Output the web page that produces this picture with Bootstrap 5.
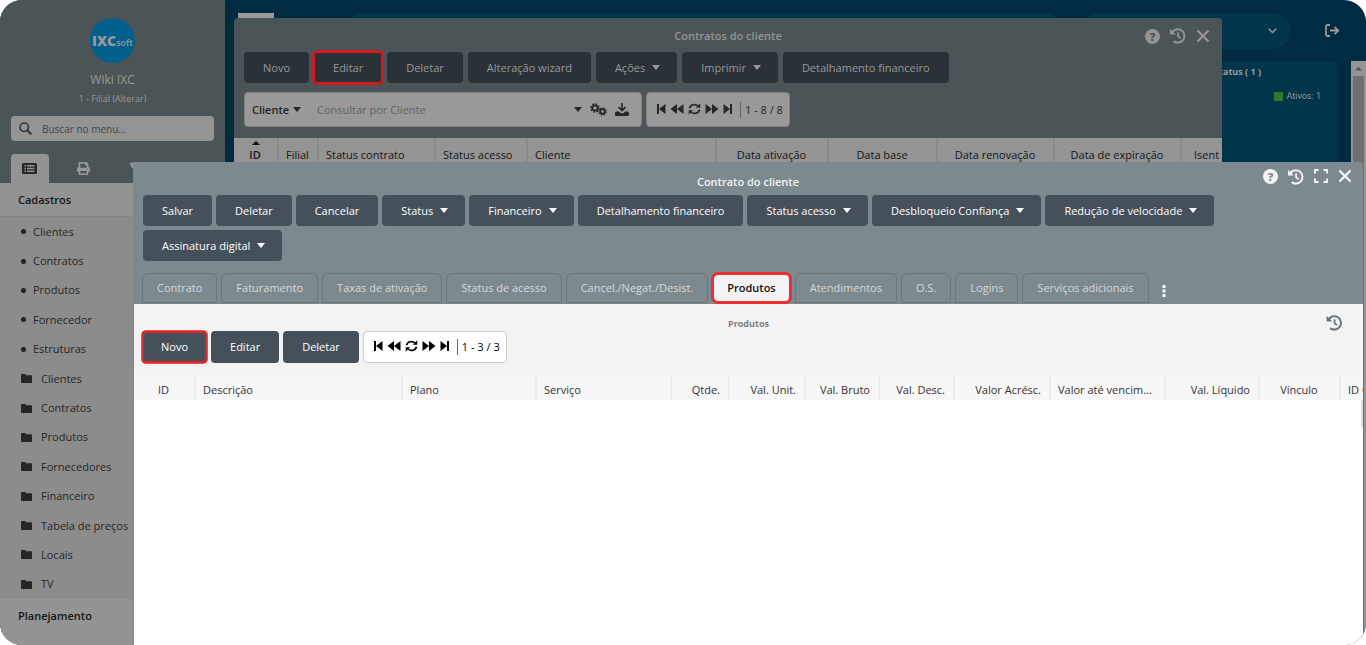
<!DOCTYPE html>
<html lang="pt-BR">
<head>
<meta charset="utf-8">
<meta name="viewport" content="width=device-width, initial-scale=1">
<title>Contrato do cliente</title>
<link href="https://cdn.jsdelivr.net/npm/bootstrap@5.3.0/dist/css/bootstrap.min.css" rel="stylesheet">
<style>
body{font-family:"Open Sans","Noto Sans",sans-serif;font-size:11px;line-height:16px;background:#fff;color:#222}
button{font:inherit}
a{text-decoration:none;color:inherit}
svg{display:block;fill:currentColor}
.app-shell{height:100vh;border-radius:22px;background:#002b40}
/* sidebar */
.side-bar{width:225px;background:#8c8c8c;color:#262626}
.side-top{background:#4b5557;color:#999;padding-top:18px}
.brand-mark{width:45px;height:45px;background:#005f8c;color:#999;font-weight:800;font-size:14px}
.brand-mark span{font-size:9px;font-weight:600}
.user-name{font-size:12px;margin-top:9px}
.user-branch{font-size:9px;margin-top:3px}
.menu-search{height:25px;background:#949494;border-radius:4px;color:#333;margin:9px 11px 0}
.menu-search input{background:none;border:0;outline:0;font-size:10px;color:#444}
.menu-search input::placeholder{color:#444;opacity:1}
.side-tabs{margin-top:13px;padding-left:11px}
.side-tabs button{width:39px;height:29px;margin-right:16px;color:#999;background:none;border:0;border-radius:4px 4px 0 0}
.side-tabs .chosen{background:#939393;color:#262626}
.menu-head{background:#939393;font-weight:600;font-size:11px;padding-left:18px;color:#161616}
.menu-first{height:34px;border-bottom:1px solid #858585}
.menu-last{padding-top:9px;padding-bottom:21px}
.menu-list a{padding-left:21px}
.menu-list .dot{width:5px;height:5px;border-radius:50%;background:#222;margin-right:7px}
.menu-list svg{margin-right:9px;width:11px;height:11px}
/* dashboard behind the windows */
.top-row{padding:13px 26px 12px 13px}
.pill{height:36px;border-radius:18px;background:#00354b}
.lead-pill{margin-left:71px}
.user-pill{width:210px;margin-left:18px;padding-right:14px}
.exit-link{margin:11px 0 0 34px}
.home-tab{width:36px;height:36px;background:#999}
.dash-card{background:#00354b;border-radius:8px;color:#999;margin:0 13px}
.dash-card h2{font-size:9px;font-weight:700;line-height:12px;padding:5px 77px 0 0}
.legend-row{padding:12px 17px 0 0}
.legend-text{font:9px/12px Roboto,sans-serif;color:#8b989e}
.legend-box{width:9px;height:9px;background:#2f7a2b}
.page-scroll{width:15px;background:#949494;color:#555}
.page-scroll .thumb{width:11px;background:#6f6f6f}
/* windows */
.win{overflow:hidden}
.win-back{left:234px;right:144px;top:18px;bottom:0;background:#4b5557;border-radius:4px 4px 0 0;color:#949494}
.win-front{left:133px;right:3px;top:162px;bottom:0;background:#7c898e;border-radius:0 4px 0 0;color:#f4f4f4}
.win-head{display:grid;grid-template-columns:1fr auto 1fr}
.win-head h1{font-size:11px;line-height:16px;font-weight:600}
.win-head button,.more-btn{border:0;background:none;padding:0;color:inherit}
.back-title{padding:2px 0}
.front-title{padding:12px 0 5px}
.ctl{gap:10px;padding-right:12px}
.front-ctl{padding:7px 11px 0 0}
.help-dot{width:15px;height:15px;border-radius:50%;background:currentColor;font-weight:800;line-height:15px;display:block}
.help-dot b{color:#7c898e;font-size:11px}
.win-back .help-dot b{color:#4b5557}
.tool-btn{border:0;border-radius:4px;height:31px;padding:0 19px;background:#46505b;color:#fff;font-size:11px;font-weight:500;white-space:nowrap}
.win-back .tool-btn{background:#2a3138;color:#999}
.tool-btn.drop::after{content:"";display:inline-block;margin-left:7px;vertical-align:2px;border:4px solid transparent;border-top:5px solid;border-bottom:0}
.tool-btn.drop{padding-right:17px}
.marked{box-shadow:0 0 0 1px #ff4848,inset 0 0 0 2px #d8282c}
.win-back .marked{box-shadow:0 0 0 2px #d01b20,inset 0 0 0 1px #d01b20}
.back-tools{gap:5px;padding:6px 10px 9px}
.back-search{padding:0 10px 11px}
.front-tools{gap:4px;padding:0 30px 0 10px}
.field-box{background:#999;border:1px solid #808080;border-radius:4px;height:35px;color:#262626}
.field-box select{appearance:none;border:0;background:none;color:#262626;font-size:11px;font-weight:600;width:41px;margin-left:7px}
.field-box input{border:0;background:none;outline:0;font-size:11px;color:#666;min-width:0}
.field-box input::placeholder{color:#636363;opacity:1}
.field-box button,.pager button{border:0;background:none;padding:0;color:inherit}
.query{width:398px}
.caret-tri{border:4px solid transparent;border-top:5px solid;border-bottom:0;display:block}
.pager{width:144px;padding:0 6px 0 9px}
.pager button{margin-right:4px;padding-bottom:2px}
.pager output{border-left:1px solid #666;line-height:16px;padding-left:4px;margin-left:3px;white-space:nowrap}
.win-front .pager{background:#fff;border-color:#ccc;height:32px;color:#000}
.data-grid{table-layout:fixed;width:100%;border-collapse:collapse}
.data-grid th{font-weight:400;white-space:nowrap;overflow:hidden;text-overflow:clip;padding:0 8px 0 7px;border-right:2px solid #ececec}
.data-grid th:last-child{border:0;padding-right:0}
.front-grid th{height:25px;padding-top:4px;background:#f7f7f7;color:#333}
.back-grid th{height:34px;background:#949494;color:#161616;border-color:#898989}
.back-grid .sorted{font-weight:600;position:relative}
.back-grid .isent{padding-left:12px}
.sorted::before{content:"";position:absolute;left:18px;top:3px;border:4px solid transparent;border-bottom:4px solid #111;border-top:0}
.w40{width:40px}.w44{width:44px}.w61{width:61px}.w58{width:58px}.w76{width:76px}.w74{width:74px}.w75{width:75px}.w81{width:81px}
.w91{width:92px}.w94{width:94px}.w96{width:96px}.w109{width:109px}.w112{width:112px}.w115{width:115px}.w117{width:117px}
.w127{width:127px}.w134{width:134px}.w135{width:135px}.w189{width:189px}.w207{width:207px}
.tab-strip{padding:12px 9px 0;margin-bottom:1px}
.tab-strip .tab-btn{height:30px;padding:0 14px;border:1px solid #68767d;border-radius:6px 6px 0 0;background:none;color:#d6dadc;font-size:11px;white-space:nowrap}
.tab-strip .tab-btn.active{background:#f3f3f3;color:#111;font-weight:600;border:2px solid #ea3034;padding:0 13px;border-radius:6px;box-shadow:0 0 0 1px #ea3034;position:relative}
.more-btn{padding:6px 0 0 9px}
.pane{background:#f3f3f3;color:#222;margin-left:1px}
.pane h2{font-size:9px;line-height:12px;font-weight:700;color:#808080;padding-top:3px}
.pane-head{padding:11px 20px 0}
.pane-tools{gap:4px;padding:0 8px 12px}
.pane-tools .tool-btn{height:32px}
.grid-body{background:#fff}
.grid-scroll{width:2px;height:27px;background:#ddd}
</style>
</head>
<body>
<svg class="d-none" aria-hidden="true">
<symbol id="i-history" viewBox="0 0 16 16"><path d="M0 .8 2 2.800A7.700 7.700 0 1 1 3 14l1.300-1.800A5.600 5.600 0 1 0 3.600 4.300L5.800 6.500H0z"/><path d="M7.200 4.200H9v3.700l2 1.600-1 1.400-2.800-2.200z"/></symbol>
<symbol id="i-close" viewBox="0 0 14 14"><path d="M1.500 1.500l11 11M12.500 1.500l-11 11" stroke="currentColor" stroke-width="2.400"/></symbol>
<symbol id="i-folder" viewBox="0 0 11 11"><path d="M1 1h3l1.300 1.300H10q1 0 1 1V9q0 1-1 1H1q-1 0-1-1V2q0-1 1-1z"/></symbol>
<symbol id="i-first" viewBox="0 0 10 12"><path d="M1 1h2v10H1zM9.500 1v10L3 6z"/></symbol>
<symbol id="i-last" viewBox="0 0 10 12"><path d="M7 1h2v10H7zM.5 1v10L7 6z"/></symbol>
<symbol id="i-prev" viewBox="0 0 14 12"><path d="M7 1v10L.5 6zM13.500 1v10L7 6z"/></symbol>
<symbol id="i-next" viewBox="0 0 14 12"><path d="M7 1v10l6.500-5zM.5 1v10L7 6z"/></symbol>
<symbol id="i-sync" viewBox="0 0 13 12"><path d="M1.500 5.300A5 4.600 0 0 1 10 3M11.500 6.700A5 4.600 0 0 1 3 9" fill="none" stroke="currentColor" stroke-width="1.700"/><path d="M12.300.3v4.500H7.900zM.7 11.700V7.200h4.400z"/></symbol>
</svg>

<div class="app-shell d-flex position-relative overflow-hidden">
  <aside class="side-bar d-flex flex-column flex-shrink-0">
    <div class="side-top text-center">
      <div class="d-flex flex-column align-items-center">
        <div class="brand-mark rounded-circle d-flex align-items-center justify-content-center">IXC<span class="pt-1">soft</span></div>
        <div class="user-name">Wiki IXC</div>
        <a href="#" class="user-branch">1 - Filial (Alterar)</a>
      </div>
      <label class="menu-search d-flex align-items-center px-2">
        <svg width="13" height="13" viewBox="0 0 13 13"><circle cx="5.200" cy="5.200" r="4.200" fill="none" stroke="currentColor" stroke-width="1.600"/><path d="M8.300 8.300l4 4" stroke="currentColor" stroke-width="2"/></svg>
        <input class="ms-2 w-75" type="text" placeholder="Buscar no menu..." aria-label="Buscar no menu">
      </label>
      <div class="side-tabs d-flex">
        <button class="chosen d-flex align-items-center justify-content-center" aria-label="Menu"><svg width="15" height="11" viewBox="0 0 15 11"><path fill-rule="evenodd" d="M1.500 0h12Q15 0 15 1.500v8Q15 11 13.500 11h-12Q0 11 0 9.500v-8Q0 0 1.500 0zM2.500 2v1.500H4V2zM5 2v1.500h7.500V2zM2.500 4.800v1.500H4V4.800zM5 4.800v1.500h7.500V4.800zM2.500 7.500V9H4V7.500zM5 7.500V9h7.500V7.500z"/></svg></button>
        <button class="d-flex align-items-center justify-content-center" aria-label="Imprimir"><svg width="13" height="13" viewBox="0 0 512 512"><path d="M448 192V77.250c0-8.490-3.370-16.620-9.370-22.630L393.370 9.370c-6-6-14.140-9.370-22.630-9.370H96C78.330 0 64 14.330 64 32v160c-35.350 0-64 28.650-64 64v112c0 8.840 7.160 16 16 16h48v96c0 17.670 14.330 32 32 32h320c17.670 0 32-14.330 32-32v-96h48c8.840 0 16-7.160 16-16V256c0-35.350-28.650-64-64-64zm-64 256H128v-96h256v96zm0-224H128V64h192v48c0 8.840 7.160 16 16 16h48v96zm48 72c-13.250 0-24-10.750-24-24s10.750-24 24-24 24 10.740 24 24-10.750 24-24 24z"/></svg></button>
        <button class="d-flex align-items-center justify-content-center" aria-label="Ferramentas"><svg width="13" height="13" viewBox="0 0 13 13"><path d="M1 0l4 3v2l7 6-1 2-7-7H2L0 2z"/></svg></button>
        <button class="d-flex align-items-center justify-content-center" aria-label="Alertas"><svg width="13" height="13" viewBox="0 0 13 13"><path d="M6 0h1v1q4 1 4 5l1 4H1l1-4q0-4 4-5z"/></svg></button>
      </div>
    </div>
    <div class="menu-head menu-first d-flex align-items-center flex-shrink-0" id="m1">Cadastros</div>
    <nav class="menu-list d-flex flex-column flex-grow-1" aria-labelledby="m1">
      <a href="#" class="flex-fill d-flex align-items-center"><i class="dot"></i>Clientes</a>
      <a href="#" class="flex-fill d-flex align-items-center"><i class="dot"></i>Contratos</a>
      <a href="#" class="flex-fill d-flex align-items-center"><i class="dot"></i>Produtos</a>
      <a href="#" class="flex-fill d-flex align-items-center"><i class="dot"></i>Fornecedor</a>
      <a href="#" class="flex-fill d-flex align-items-center"><i class="dot"></i>Estruturas</a>
      <a href="#" class="flex-fill d-flex align-items-center"><svg><use href="#i-folder"/></svg>Clientes</a>
      <a href="#" class="flex-fill d-flex align-items-center"><svg><use href="#i-folder"/></svg>Contratos</a>
      <a href="#" class="flex-fill d-flex align-items-center"><svg><use href="#i-folder"/></svg>Produtos</a>
      <a href="#" class="flex-fill d-flex align-items-center"><svg><use href="#i-folder"/></svg>Fornecedores</a>
      <a href="#" class="flex-fill d-flex align-items-center"><svg><use href="#i-folder"/></svg>Financeiro</a>
      <a href="#" class="flex-fill d-flex align-items-center"><svg><use href="#i-folder"/></svg>Tabela de preços</a>
      <a href="#" class="flex-fill d-flex align-items-center"><svg><use href="#i-folder"/></svg>Locais</a>
      <a href="#" class="flex-fill d-flex align-items-center"><svg><use href="#i-folder"/></svg>TV</a>
    </nav>
    <div class="menu-head menu-last d-flex flex-shrink-0">Planejamento</div>
  </aside>

  <main class="flex-grow-1 d-flex flex-column">
    <div class="top-row d-flex">
      <div class="home-tab"></div>
      <div class="pill lead-pill flex-grow-1"></div>
      <button class="pill user-pill border-0 d-flex align-items-center justify-content-end" aria-label="Usuário"><svg width="9" height="6" viewBox="0 0 9 6"><path d="M.7.7l3.800 3.800L8.300.7" fill="none" stroke="#999" stroke-width="1.400"/></svg></button>
      <a href="#" class="exit-link" aria-label="Sair"><svg width="15" height="13" viewBox="0 0 15 13" fill="none" stroke="#999" stroke-width="1.800"><path d="M5 1H2.500Q1 1 1 2.500v8Q1 12 2.500 12H5M5 6.500h8M9.500 2.800l3.800 3.700-3.800 3.700" fill="none"/></svg></a>
    </div>
    <div class="d-flex flex-grow-1">
      <section class="dash-card flex-grow-1 d-flex flex-column align-items-end">
        <h2 class="mb-0">Status ( 1 )</h2>
        <div class="legend-row d-flex align-items-center"><i class="legend-box me-1"></i><span class="legend-text">Ativos: 1</span></div>
      </section>
      <div class="page-scroll d-flex flex-column align-items-center">
        <svg class="my-1" width="7" height="7" viewBox="0 0 7 7"><path d="M0 5.500L3.500 1.500 7 5.500z"/></svg>
        <div class="thumb flex-grow-1"></div>
      </div>
    </div>
  </main>

  <section class="win win-back position-absolute">
    <header class="win-head pt-2">
      <span></span><h1 class="m-0 back-title">Contratos do cliente</h1>
      <div class="d-flex justify-content-end align-items-center ctl">
        <button aria-label="Ajuda"><span class="help-dot"><b>?</b></span></button>
        <button aria-label="Histórico"><svg width="16" height="16"><use href="#i-history"/></svg></button>
        <button aria-label="Fechar"><svg width="14" height="14"><use href="#i-close"/></svg></button>
      </div>
    </header>
    <div class="back-tools d-flex">
      <button class="tool-btn">Novo</button><button class="tool-btn marked">Editar</button><button class="tool-btn">Deletar</button><button class="tool-btn">Alteração wizard</button><button class="tool-btn drop">Ações</button><button class="tool-btn drop">Imprimir</button><button class="tool-btn">Detalhamento financeiro</button>
    </div>
    <div class="back-search d-flex gap-1">
      <div class="field-box query d-flex align-items-center">
        <select aria-label="Campo de busca" class="p-0"><option>Cliente</option></select><i class="caret-tri"></i>
        <input class="flex-grow-1 ms-3 p-0" type="text" placeholder="Consultar por Cliente" aria-label="Consultar por Cliente">
        <button aria-label="Abrir"><i class="caret-tri"></i></button>
        <button class="ms-2" aria-label="Configurar"><svg width="17" height="13" viewBox="0 0 17 13"><g fill="none" stroke="currentColor"><circle cx="5" cy="5" r="2.700" stroke-width="1.800"/><circle cx="5" cy="5" r="4" stroke-width="1.600" stroke-dasharray="1.600 1.540"/><circle cx="12.500" cy="8.500" r="2.300" stroke-width="1.800"/><circle cx="12.500" cy="8.500" r="3.500" stroke-width="1.500" stroke-dasharray="1.400 1.350"/></g></svg></button>
        <button class="ms-2 me-2 pe-1" aria-label="Baixar"><svg width="14" height="13" viewBox="0 0 14 13"><path d="M6.200 0h1.600v5.500l2-2L11 4.700l-4 4-4-4 1.200-1.200 2 2zM1.500 8.500h2.300l2 1.800h2.400l2-1.800h2.300q1.500 0 1.500 1.500v1.500q0 1.500-1.500 1.500h-11Q0 13 0 11.500V10q0-1.500 1.500-1.500z"/></svg></button>
      </div>
      <div class="field-box pager d-flex align-items-center">
        <button aria-label="Primeira"><svg width="10" height="12"><use href="#i-first"/></svg></button><button aria-label="Anterior"><svg width="14" height="12"><use href="#i-prev"/></svg></button><button aria-label="Atualizar"><svg width="13" height="12"><use href="#i-sync"/></svg></button><button aria-label="Próxima"><svg width="14" height="12"><use href="#i-next"/></svg></button><button aria-label="Última"><svg width="10" height="12"><use href="#i-last"/></svg></button><output>1 - 8 / 8</output>
      </div>
    </div>
    <div class="back-data px-0">
    <table class="data-grid back-grid">
      <thead><tr><th class="w44 sorted text-center">ID</th><th class="w40">Filial</th><th class="w117">Status contrato</th><th class="w91">Status acesso</th><th class="w189">Cliente</th><th class="w112 text-center">Data ativação</th><th class="w109 text-center">Data base</th><th class="w117 text-center">Data renovação</th><th class="w127 text-center">Data de expiração</th><th class="isent">Isent</th></tr></thead>
    </table>
    </div>
  </section>

  <section class="win win-front position-absolute d-flex flex-column">
    <header class="win-head">
      <span></span><h1 class="m-0 front-title">Contrato do cliente</h1>
      <div class="d-flex justify-content-end align-items-start ctl front-ctl">
        <button aria-label="Ajuda"><span class="help-dot"><b>?</b></span></button>
        <button aria-label="Histórico"><svg width="16" height="16"><use href="#i-history"/></svg></button>
        <button aria-label="Tela cheia"><svg width="14" height="14" viewBox="0 0 14 14"><path d="M1 4.500V1h3.500M9.500 1H13v3.500M13 9.500V13H9.500M4.500 13H1V9.500" fill="none" stroke="currentColor" stroke-width="2"/></svg></button>
        <button aria-label="Fechar"><svg width="14" height="14"><use href="#i-close"/></svg></button>
      </div>
    </header>
    <div class="front-tools d-flex flex-wrap">
      <button class="tool-btn">Salvar</button><button class="tool-btn">Deletar</button><button class="tool-btn">Cancelar</button><button class="tool-btn drop">Status</button><button class="tool-btn drop">Financeiro</button><button class="tool-btn">Detalhamento financeiro</button><button class="tool-btn drop">Status acesso</button><button class="tool-btn drop">Desbloqueio Confiança</button><button class="tool-btn drop">Redução de velocidade</button><button class="tool-btn drop">Assinatura digital</button>
    </div>
    <div class="tab-strip d-flex gap-1" role="tablist">
      <button class="tab-btn" role="tab">Contrato</button><button class="tab-btn" role="tab">Faturamento</button><button class="tab-btn" role="tab">Taxas de ativação</button><button class="tab-btn" role="tab">Status de acesso</button><button class="tab-btn" role="tab">Cancel./Negat./Desist.</button><button class="tab-btn active" role="tab">Produtos</button><button class="tab-btn" role="tab">Atendimentos</button><button class="tab-btn" role="tab">O.S.</button><button class="tab-btn" role="tab">Logins</button><button class="tab-btn" role="tab">Serviços adicionais</button>
      <button class="more-btn" aria-label="Mais abas"><svg width="4" height="14" viewBox="0 0 4 14"><path d="M.5 1h3v3h-3zM.5 5.500h3v3h-3zM.5 10h3v3h-3z" fill="#fff"/></svg></button>
    </div>
    <div class="pane flex-grow-1 d-flex flex-column">
      <header class="win-head pane-head"><span></span><h2 class="m-0">Produtos</h2><div class="d-flex justify-content-end"><button class="text-secondary" aria-label="Histórico"><svg width="17" height="16"><use href="#i-history"/></svg></button></div></header>
      <div class="pane-tools d-flex">
        <button class="tool-btn marked">Novo</button><button class="tool-btn">Editar</button><button class="tool-btn">Deletar</button>
        <div class="field-box pager d-flex align-items-center">
          <button aria-label="Primeira"><svg width="10" height="12"><use href="#i-first"/></svg></button><button aria-label="Anterior"><svg width="14" height="12"><use href="#i-prev"/></svg></button><button aria-label="Atualizar"><svg width="13" height="12"><use href="#i-sync"/></svg></button><button aria-label="Próxima"><svg width="14" height="12"><use href="#i-next"/></svg></button><button aria-label="Última"><svg width="10" height="12"><use href="#i-last"/></svg></button><output>1 - 3 / 3</output>
        </div>
      </div>
      <table class="data-grid front-grid">
        <thead><tr><th class="w61 text-center">ID</th><th class="w207">Descrição</th><th class="w134">Plano</th><th class="w135">Serviço</th><th class="w58 text-end">Qtde.</th><th class="w76 text-end">Val. Unit.</th><th class="w74 text-end">Val. Bruto</th><th class="w75 text-end">Val. Desc.</th><th class="w96 text-end">Valor Acrésc.</th><th class="w115">Valor até vencim...</th><th class="w94 text-end">Val. Líquido</th><th class="w81 text-center">Vínculo</th><th>ID C</th></tr></thead>
      </table>
      <div class="grid-body flex-grow-1 d-flex justify-content-end"><div class="grid-scroll"></div></div>
    </div>
  </section>
</div>
<script src="https://cdn.jsdelivr.net/npm/bootstrap@5.3.0/dist/js/bootstrap.bundle.min.js"></script>
</body>
</html>
